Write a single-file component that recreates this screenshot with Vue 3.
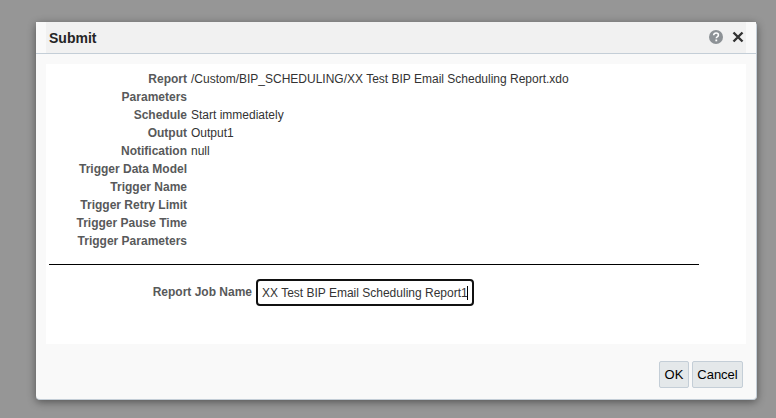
<template>
  <div class="backdrop">
    <div class="dialog">
      <div class="dialog-header">
        <span class="dialog-title">Submit</span>
        <div class="header-icons">
          <svg class="help-icon" width="16" height="16" viewBox="0 0 16 16">
            <circle cx="8" cy="8" r="7" fill="#8d9296" />
            <path d="M5.7 6.2c0-1.4 1-2.2 2.4-2.2s2.3.8 2.3 2c0 1-.6 1.5-1.2 1.9-.6.4-.9.7-.9 1.4" fill="none" stroke="#fff" stroke-width="1.6" />
            <rect x="7.4" y="10.5" width="1.8" height="1.8" fill="#fff" />
          </svg>
          <svg class="close-icon" width="12" height="12" viewBox="0 0 12 12">
            <path d="M1.5 1.5l9 9M10.5 1.5l-9 9" fill="none" stroke="#333" stroke-width="2.4" />
          </svg>
        </div>
      </div>

      <div class="dialog-content">
        <div class="info-rows">
          <div class="info-row" v-for="row in rows" :key="row.label">
            <span class="info-label">{{ row.label }}</span>
            <span class="info-value">{{ row.value }}</span>
          </div>
        </div>
        <div class="separator"></div>
        <div class="job-row">
          <label class="job-label">Report Job Name</label>
          <div class="job-field">
            <input class="job-input" type="text" value="XX Test BIP Email Scheduling Report1" />
            <span class="job-caret"></span>
          </div>
        </div>
      </div>

      <div class="dialog-footer">
        <button class="btn btn-ok">OK</button>
        <button class="btn btn-cancel">Cancel</button>
      </div>
    </div>
  </div>
</template>

<script setup>
const rows = [
  { label: 'Report', value: '/Custom/BIP_SCHEDULING/XX Test BIP Email Scheduling Report.xdo' },
  { label: 'Parameters', value: '' },
  { label: 'Schedule', value: 'Start immediately' },
  { label: 'Output', value: 'Output1' },
  { label: 'Notification', value: 'null' },
  { label: 'Trigger Data Model', value: '' },
  { label: 'Trigger Name', value: '' },
  { label: 'Trigger Retry Limit', value: '' },
  { label: 'Trigger Pause Time', value: '' },
  { label: 'Trigger Parameters', value: '' }
]
</script>

<style>
html, body {
  margin: 0;
  background: #969696;
}
</style>

<style scoped>
.backdrop {
  width: 776px;
  height: 418px;
  box-sizing: border-box;
  padding: 22px 0 0 36px;
  background: #969696;
  font-family: "Liberation Sans", Arial, sans-serif;
  font-size: 12px;
  overflow: hidden;
}

.dialog {
  width: 721px;
  height: 378px;
  box-sizing: border-box;
  padding: 0 10px;
  background: #f9f9f9;
  border-radius: 4px;
  border-right: 1px solid #c4ced7;
  border-bottom: 1px solid #c4ced7;
  box-shadow: 0 2px 8px rgba(0, 0, 0, 0.45);
  display: flex;
  flex-direction: column;
}

.dialog-header {
  height: 31px;
  margin: 0 -10px;
  padding: 0 13px;
  background: linear-gradient(to right, #f9f9f9 10px, #f1f1f1 10px, #f1f1f1 calc(100% - 10px), #f9f9f9 calc(100% - 10px));
  border-bottom: 1px solid #c4ced7;
  display: flex;
  align-items: center;
  justify-content: space-between;
  flex-shrink: 0;
}

.dialog-title {
  font-size: 14px;
  font-weight: bold;
  color: #252525;
}

.header-icons {
  display: flex;
  align-items: center;
  gap: 8px;
  margin-top: -1px;
  margin-right: -1px;
}

.dialog-content {
  height: 280px;
  margin-top: 10px;
  background: #fff;
  flex-shrink: 0;
}

.info-rows {
  padding-top: 6px;
}

.info-row {
  display: flex;
  height: 18px;
  line-height: 18px;
}

.info-label {
  width: 141px;
  text-align: right;
  font-weight: bold;
  color: #58595a;
}

.info-value {
  margin-left: 4px;
  color: #333;
}

.separator {
  width: 650px;
  height: 1px;
  margin: 14px 0 0 3px;
  background: #000;
}

.job-row {
  display: flex;
  align-items: center;
  margin-top: 14px;
}

.job-label {
  width: 206px;
  margin-top: -1px;
  text-align: right;
  font-weight: bold;
  color: #58595a;
}

.job-field {
  position: relative;
  margin-left: 4px;
}

.job-input {
  display: block;
  width: 218px;
  height: 27px;
  box-sizing: border-box;
  padding: 0 4px;
  border: 2px solid #111;
  border-radius: 4px;
  outline: none;
  background: #fff;
  font-family: inherit;
  font-size: 12px;
  color: #333;
}

/* blinking text cursor, caught in its visible state */
.job-caret {
  position: absolute;
  left: 211px;
  top: 7px;
  width: 1px;
  height: 14px;
  background: #000;
}

.dialog-footer {
  display: flex;
  justify-content: flex-end;
  gap: 3px;
  padding: 17px 3px 0 0;
}

.btn {
  height: 27px;
  box-sizing: border-box;
  padding: 0;
  border: 1px solid #c4ced7;
  border-radius: 2px;
  background: #e4e8ea;
  font-family: inherit;
  font-size: 13px;
  color: #000;
}

.btn-ok {
  width: 30px;
}

.btn-cancel {
  width: 51px;
}
</style>
